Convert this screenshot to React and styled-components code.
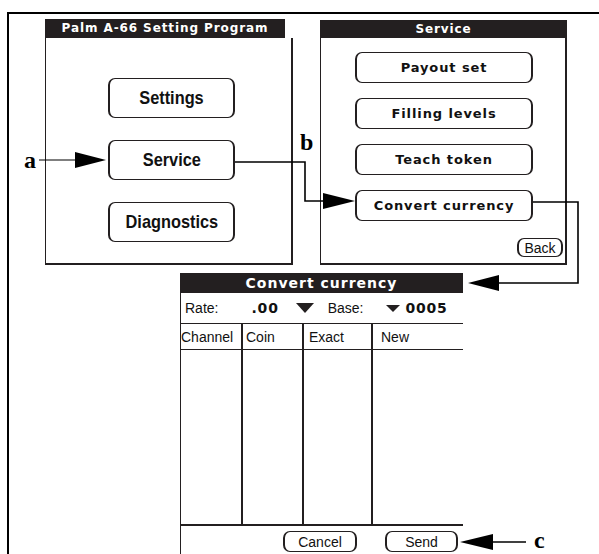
import React from "react";
import styled, { createGlobalStyle } from "styled-components";

const GlobalStyle = createGlobalStyle`
  html, body {
    margin: 0;
    padding: 0;
    background: #ffffff;
  }
  body {
    font-family: "DejaVu Sans", "Liberation Sans", sans-serif;
    color: #111;
  }
`;

const INK = "#231f20";
const NARROW = `"Liberation Sans", Arial, sans-serif`;
const WIDE = `"DejaVu Sans", Verdana, sans-serif`;

const Page = styled.div`
  position: relative;
  width: 599px;
  height: 554px;
  overflow: hidden;
  background: #fff;
`;

const Frame = styled.div`
  box-sizing: border-box;
  height: 542px;
  margin: 12px 0 0 7px;
  padding: 5px 0 0 36px;
  border-top: 2px solid #000;
  border-left: 2px solid #000;
`;

const TopRow = styled.div`
  display: flex;
  align-items: flex-start;
  gap: 27px;
`;

const BottomRow = styled.div`
  display: flex;
  margin-top: 8px;
  padding-left: 135px;
`;

const Screen = styled.div`
  display: flex;
  flex-direction: column;
  width: ${(p) => p.$w}px;
  height: ${(p) => p.$h}px;
  margin-top: ${(p) => p.$top || 0}px;
  background: #fff;
`;

const TitleBar = styled.div`
  box-sizing: border-box;
  width: ${(p) => (p.$w ? `${p.$w}px` : "100%")};
  height: ${(p) => p.$h}px;
  background: ${INK};
  color: #fff;
  font-family: ${WIDE};
  font-weight: bold;
  font-size: ${(p) => p.$size}px;
  line-height: ${(p) => p.$h}px;
  letter-spacing: ${(p) => p.$ls || 0}px;
  text-align: center;
  white-space: nowrap;
`;

const ScreenBody = styled.div`
  flex: 1;
  display: flex;
  flex-direction: column;
  border-left: 1px solid ${INK};
  border-right: ${(p) => (p.$open ? "none" : `2px solid ${INK}`)};
  border-bottom: ${(p) => (p.$open ? "none" : `2px solid ${INK}`)};
`;

const ButtonStack = styled.div`
  display: flex;
  flex-direction: column;
  align-items: flex-start;
  gap: ${(p) => p.$gap}px;
  padding-top: ${(p) => p.$top}px;
  padding-left: ${(p) => p.$left}px;
`;

const PalmButton = styled.div`
  box-sizing: border-box;
  display: flex;
  align-items: center;
  justify-content: center;
  width: ${(p) => p.$w}px;
  height: ${(p) => p.$h}px;
  border: 1px solid ${INK};
  border-left-width: 2px;
  border-right-width: 2px;
  border-radius: 7px;
  font-family: ${(p) => (p.$narrow ? NARROW : WIDE)};
  font-weight: ${(p) => (p.$light ? "normal" : "bold")};
  font-size: ${(p) => p.$size}px;
  letter-spacing: ${(p) => p.$ls || 0}px;
  white-space: nowrap;
  color: #111;
`;

const Squeezed = styled.span`
  display: inline-block;
  transform: scaleX(0.86);
`;

const BackRow = styled.div`
  display: flex;
  justify-content: flex-end;
  margin-top: 17px;
  padding-right: 2px;
`;

const RateRow = styled.div`
  display: flex;
  align-items: center;
  height: 30px;
  border-bottom: 1px solid ${INK};
  font-family: ${NARROW};
  font-size: 14px;
`;

const RateText = styled.span`
  margin-left: ${(p) => p.$ml}px;
  white-space: nowrap;
`;

const RateValue = styled.span`
  margin-left: ${(p) => p.$ml}px;
  font-family: ${WIDE};
  font-weight: bold;
  font-size: 14px;
  letter-spacing: 0.8px;
  white-space: nowrap;
`;

const Caret = styled.span`
  display: inline-block;
  margin-left: ${(p) => p.$ml}px;
  width: 0;
  height: 0;
  border-left: ${(p) => p.$w / 2}px solid transparent;
  border-right: ${(p) => p.$w / 2}px solid transparent;
  border-top: ${(p) => p.$h}px solid ${INK};
`;

const Table = styled.div`
  display: grid;
  grid-template-columns: 62px 61px 69px 1fr;
  grid-template-rows: 26px 174px;
  width: 282px;
  border-bottom: 2px solid ${INK};
`;

const HeadCell = styled.div`
  padding-left: ${(p) => p.$pl}px;
  border-right: ${(p) => (p.$last ? "none" : `2px solid ${INK}`)};
  border-bottom: 1px solid ${INK};
  font-family: ${NARROW};
  font-size: 14px;
  line-height: 26px;
  white-space: nowrap;
  overflow: hidden;
`;

const BodyCell = styled.div`
  border-right: ${(p) => (p.$last ? "none" : `2px solid ${INK}`)};
`;

const FormButtons = styled.div`
  display: flex;
  gap: 28px;
  padding: 5px 0 0 102px;
`;

const Overlay = styled.svg`
  position: absolute;
  left: 0;
  top: 0;
  pointer-events: none;
`;

const Marker = styled.span`
  position: absolute;
  left: ${(p) => p.$x}px;
  top: ${(p) => p.$y}px;
  font-family: "Liberation Serif", "Times New Roman", serif;
  font-weight: bold;
  font-size: 24px;
  line-height: 1;
  color: #000;
`;

const MainScreen = () => (
  <Screen $w={248} $h={246}>
    <TitleBar $w={240} $h={19} $size={12} $ls={0.9}>
      Palm A-66 Setting Program
    </TitleBar>
    <ScreenBody>
      <ButtonStack $gap={22} $top={40} $left={62}>
        {["Settings", "Service", "Diagnostics"].map((label) => (
          <PalmButton key={label} $w={127} $h={40} $size={19} $narrow>
            <Squeezed>{label}</Squeezed>
          </PalmButton>
        ))}
      </ButtonStack>
    </ScreenBody>
  </Screen>
);

const ServiceScreen = () => (
  <Screen $w={247} $h={245} $top={1}>
    <TitleBar $h={18} $size={12} $ls={0.9}>
      Service
    </TitleBar>
    <ScreenBody>
      <ButtonStack $gap={15} $top={14} $left={34}>
        {["Payout set", "Filling levels", "Teach token", "Convert currency"].map((label) => (
          <PalmButton key={label} $w={178} $h={31} $size={13} $ls={0.9}>
            {label}
          </PalmButton>
        ))}
      </ButtonStack>
      <BackRow>
        <PalmButton $w={46} $h={19} $size={14} $narrow $light>
          Back
        </PalmButton>
      </BackRow>
    </ScreenBody>
  </Screen>
);

const columns = [
  { name: "Channel", pl: 0 },
  { name: "Coin", pl: 3 },
  { name: "Exact", pl: 5 },
  { name: "New", pl: 8 },
];

const ConvertScreen = () => (
  <Screen $w={283} $h={290}>
    <TitleBar $h={20} $size={14} $ls={1}>
      Convert currency
    </TitleBar>
    <ScreenBody $open>
      <RateRow>
        <RateText $ml={4}>Rate:</RateText>
        <RateValue $ml={33}>.00</RateValue>
        <Caret $ml={17} $w={18} $h={10} />
        <RateText $ml={14}>Base:</RateText>
        <Caret $ml={23} $w={15} $h={7} />
        <RateValue $ml={5}>0005</RateValue>
      </RateRow>
      <Table>
        {columns.map((c, i) => (
          <HeadCell key={c.name} $pl={c.pl} $last={i === columns.length - 1}>
            {c.name}
          </HeadCell>
        ))}
        {columns.map((c, i) => (
          <BodyCell key={c.name} $last={i === columns.length - 1} />
        ))}
      </Table>
      <FormButtons>
        <PalmButton $w={74} $h={21} $size={14} $narrow $light>
          Cancel
        </PalmButton>
        <PalmButton $w={73} $h={21} $size={14} $narrow $light>
          Send
        </PalmButton>
      </FormButtons>
    </ScreenBody>
  </Screen>
);

const Connectors = () => (
  <Overlay width="599" height="554" viewBox="0 0 599 554">
    <g stroke="#000" fill="none">
      <line x1="39" y1="160" x2="77" y2="160" strokeWidth="1.2" />
      <polyline points="235,162 305,162 305,201 325,201" strokeWidth="1.6" />
      <polyline points="533,202 578,202 578,283 496,283" strokeWidth="1.6" />
      <line x1="490" y1="542" x2="526" y2="542" strokeWidth="1.6" />
    </g>
    <g fill="#000">
      <polygon points="75,152 106,160 75,168" />
      <polygon points="323,193 355,201 323,209" />
      <polygon points="499,275 468,283 499,291" />
      <polygon points="493,534 460,542 493,550" />
    </g>
  </Overlay>
);

const App = () => (
  <Page>
    <GlobalStyle />
    <Frame>
      <TopRow>
        <MainScreen />
        <ServiceScreen />
      </TopRow>
      <BottomRow>
        <ConvertScreen />
      </BottomRow>
    </Frame>
    <Connectors />
    <Marker $x={24} $y={148}>a</Marker>
    <Marker $x={300} $y={130}>b</Marker>
    <Marker $x={534} $y={528}>c</Marker>
  </Page>
);

export default App;
